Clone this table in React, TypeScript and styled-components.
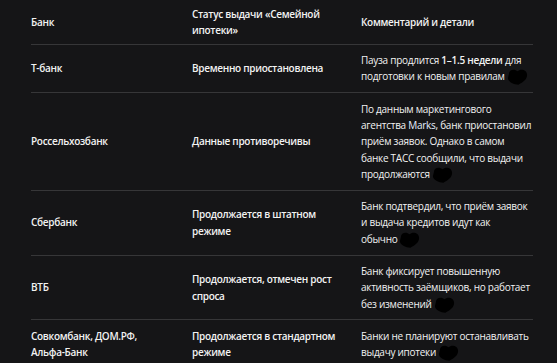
import React from "react";
import styled, { createGlobalStyle } from "styled-components";

const GlobalStyle = createGlobalStyle`
  html, body {
    margin: 0;
    padding: 0;
    background: #151517;
  }
`;

const Page = styled.div`
  width: 557px;
  height: 363px;
  overflow: hidden;
  padding-left: 31px;
  box-sizing: border-box;

  background: #151517;
  color: #f2f2f2;
  font-family: "Open Sans", "Noto Sans", sans-serif;
  font-size: 10px;
  line-height: 16.3px;
`;

const Table = styled.table`
  width: 502px;
  border-collapse: collapse;
  table-layout: fixed;

  tr {
    border-bottom: 1px solid #363638;
  }
`;

const HeadCell = styled.th`
  padding: 5.5px 8px 5.5px 0;
  text-align: left;
  vertical-align: middle;
  font-weight: 600;
  letter-spacing: -0.3px;

  &:last-child {
    padding-right: 0;
  }
`;

const Cell = styled.td<{ $bold?: boolean }>`
  padding: 7.5px 8px 7.5px 0;
  vertical-align: middle;
  font-weight: ${({ $bold }) => ($bold ? 600 : 400)};
  letter-spacing: ${({ $bold }) => ($bold ? "-0.3px" : "-0.27px")};

  &:last-child {
    padding-right: 0;
  }

  b {
    font-weight: 600;
  }
`;

const Accent = styled.span`
  color: #e6efff;
`;

const Tail = styled.span`
  white-space: nowrap;
`;

// zero-height box so the blot does not change the line height
const BlotBox = styled.span`
  display: inline-block;
  width: 24px;
  height: 0;
  vertical-align: baseline;
`;

const BlotSvg = styled.svg`
  display: block;
  margin: -12px 0 0 1px;
`;

interface Row {
  bank: string[];
  status: string;
  comment: React.ReactNode;
  last: string;
}

const Blot = () => (
  <BlotBox>
    <BlotSvg width="23" height="18" viewBox="0 0 24 18">
      <path d="M3 6 C3 1 9 0 12 3 C15 0 22 1 22 7 C22 12 17 15 13 17 C8 17 2 14 2 10 Z" fill="#000" />
    </BlotSvg>
  </BlotBox>
);

const rows: Row[] = [
  {
    bank: ["Т-банк"],
    status: "Временно приостановлена",
    comment: (
      <>
        Пауза продлится <b>1–1.5 недели</b> для подготовки к новым
      </>
    ),
    last: "правилам",
  },
  {
    bank: ["Россельхозбанк"],
    status: "Данные противоречивы",
    comment: (
      <>
        По данным маркетингового агентства <Accent>Marks</Accent>, банк приостановил приём заявок. Однако в
        самом банке ТАСС сообщили, что выдачи
      </>
    ),
    last: "продолжаются",
  },
  {
    bank: ["Сбербанк"],
    status: "Продолжается в штатном режиме",
    comment: "Банк подтвердил, что приём заявок и выдача кредитов идут как",
    last: "обычно",
  },
  {
    bank: ["ВТБ"],
    status: "Продолжается, отмечен рост спроса",
    comment: "Банк фиксирует повышенную активность заёмщиков, но работает без",
    last: "изменений",
  },
  {
    bank: ["Совкомбанк, ДОМ.РФ,", "Альфа-Банк"],
    status: "Продолжается в стандартном режиме",
    comment: "Банки не планируют останавливать выдачу",
    last: "ипотеки",
  },
];

const App = () => {
  return (
    <Page>
      <GlobalStyle />
      <Table>
        <colgroup>
          <col style={{ width: 161 }} />
          <col style={{ width: 169 }} />
          <col style={{ width: 172 }} />
        </colgroup>
        <thead>
          <tr>
            <HeadCell>Банк</HeadCell>
            <HeadCell>Статус выдачи «Семейной ипотеки»</HeadCell>
            <HeadCell>Комментарий и детали</HeadCell>
          </tr>
        </thead>
        <tbody>
          {rows.map((row, i) => (
            <tr key={i}>
              <Cell $bold>
                {row.bank.map((b, j) => (
                  <div key={j}>{b}</div>
                ))}
              </Cell>
              <Cell $bold>{row.status}</Cell>
              <Cell>
                {row.comment}{" "}
                <Tail>
                  {row.last}
                  <Blot />
                </Tail>
              </Cell>
            </tr>
          ))}
        </tbody>
      </Table>
    </Page>
  );
};

export default App;
